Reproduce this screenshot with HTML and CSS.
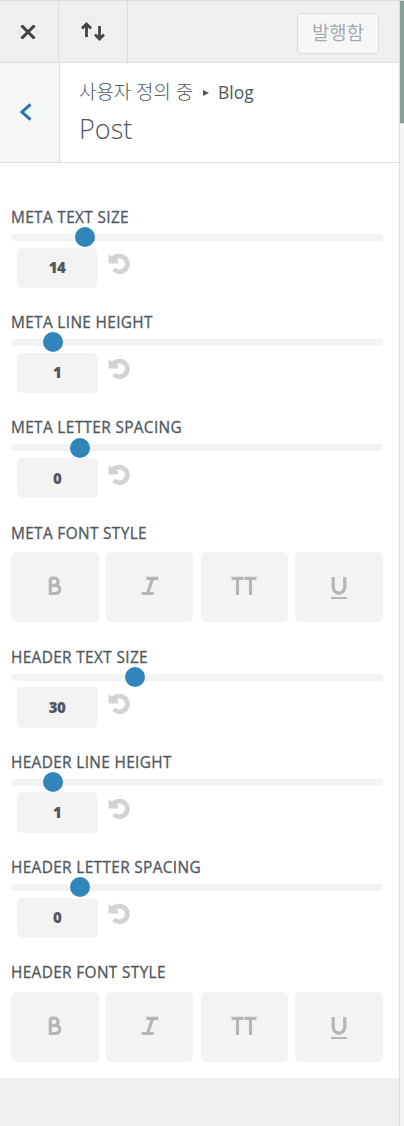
FILE: index.html
```html
<!DOCTYPE html>
<html lang="ko">
  <head>
    <meta charset="UTF-8" />
    <meta name="viewport" content="width=device-width, initial-scale=1.0" />
    <title>Post</title>
    <link rel="stylesheet" href="styles.css">
  </head>
  <body>
    <svg class="sprite">
      <symbol id="undo" viewBox="0 0 22 22">
        <path d="M.5 1v9.500h9.500V7.500L5 2.800 3.500 3.500Z" />
        <path class="ring" d="M4.800 5.400C6.600 3.900 8.700 3.200 11.500 3.200a7.800 7.800 0 1 1-5.600 13.200" />
      </symbol>
      <symbol id="bold" viewBox="0 0 24 24">
        <path d="M7.300 3.200h4.200a3.600 3.600 0 0 1 0 7.200H7.300M11.500 10.400h1.200a4 4 0 0 1 0 8.100H7.300V3.200" />
      </symbol>
      <symbol id="italic" viewBox="0 0 24 24">
        <path d="M8.500 3.300h11.700M3.700 18.500h12M14.600 3.300l-5 15.200" />
      </symbol>
      <symbol id="caps" viewBox="0 0 26 24">
        <path d="M.5 3.300h12M6.500 3.300V20M13.500 3.300h12M19.500 3.300V20" />
      </symbol>
      <symbol id="underline" viewBox="0 0 24 24">
        <path d="M6.200 2v10a5.800 6.200 0 0 0 11.600 0V2" />
        <path class="thin" d="M4 23h16" />
      </symbol>
    </svg>

    <div class="sidebar">
      <header class="actions">
        <button class="close">
          <svg width="16" height="14" viewBox="0 0 16 14"><path d="M1.500.5l13 13M14.500.5l-13 13" /></svg>
        </button>
        <button class="reorder">
          <svg width="24" height="19" viewBox="0 0 24 19">
            <path d="M5.500 15V2M1 6.500l4.500-4.500L10 6.500M18.500 4v13M14 12.500l4.500 4.500L23 12.500" />
          </svg>
        </button>
        <button class="publish">발행함</button>
      </header>

      <div class="section-title">
        <button class="back">
          <svg width="12" height="18" viewBox="0 0 12 18"><path d="M10.500 1.300L2 9l8.500 7.700" /></svg>
        </button>
        <div class="titles">
          <div class="crumbs"><span class="ko">사용자 정의 중</span><i class="arrow"></i><span>Blog</span></div>
          <h3>Post</h3>
        </div>
      </div>

      <div class="controls">
        <div class="control">
          <label>Meta Text Size</label>
          <input type="range" min="0" max="77" value="14">
          <div class="value"><input type="text" value="14"><svg class="reset"><use href="#undo" /></svg></div>
        </div>
        <div class="control">
          <label>Meta Line Height</label>
          <input type="range" min="0" max="11" value="1">
          <div class="value"><input type="text" value="1"><svg class="reset"><use href="#undo" /></svg></div>
        </div>
        <div class="control">
          <label>Meta Letter Spacing</label>
          <input type="range" min="-2" max="10" value="0">
          <div class="value"><input type="text" value="0"><svg class="reset"><use href="#undo" /></svg></div>
        </div>
        <div class="control styles">
          <label>Meta Font Style</label>
          <div class="buttons">
            <button><svg><use href="#bold" /></svg></button>
            <button><svg><use href="#italic" /></svg></button>
            <button><svg class="caps"><use href="#caps" /></svg></button>
            <button><svg><use href="#underline" /></svg></button>
          </div>
        </div>
        <div class="control">
          <label>Header Text Size</label>
          <input type="range" min="0" max="93" value="30">
          <div class="value"><input type="text" value="30"><svg class="reset"><use href="#undo" /></svg></div>
        </div>
        <div class="control">
          <label>Header Line Height</label>
          <input type="range" min="0" max="11" value="1">
          <div class="value"><input type="text" value="1"><svg class="reset"><use href="#undo" /></svg></div>
        </div>
        <div class="control">
          <label>Header Letter Spacing</label>
          <input type="range" min="-2" max="10" value="0">
          <div class="value"><input type="text" value="0"><svg class="reset"><use href="#undo" /></svg></div>
        </div>
        <div class="control styles">
          <label>Header Font Style</label>
          <div class="buttons">
            <button><svg><use href="#bold" /></svg></button>
            <button><svg><use href="#italic" /></svg></button>
            <button><svg class="caps"><use href="#caps" /></svg></button>
            <button><svg><use href="#underline" /></svg></button>
          </div>
        </div>
      </div>
    </div>
    <div class="preview"><div class="hero"></div></div>
  </body>
</html>
```
FILE: styles.css
```css
* {
  box-sizing: border-box;
}
body {
  margin: 0;
  display: flex;
  height: 1126px;
  overflow: hidden;
  border-top: 1px solid #ddd;
  background: #f5f5f5;
  color: #50575e;
  font-family: "Open Sans", "Noto Sans CJK KR", sans-serif;
}
button {
  padding: 0;
  border: 0;
  background: none;
  font-family: inherit;
  cursor: pointer;
}
svg {
  display: block;
  fill: none;
}
.sprite {
  position: absolute;
  width: 0;
  height: 0;
}
.sidebar {
  width: 400px;
  flex: none;
  background: #efefef;
  border-right: 1px solid #ddd;
}
.preview {
  flex: 1;
}
.hero {
  height: 123px;
  background: #879f98;
  border-bottom: 1px solid #dcdcdc;
}

/* top bar */
.actions {
  display: flex;
  height: 62px;
  border-bottom: 1px solid #ddd;
}
.close,
.reorder {
  display: flex;
  align-items: center;
  border-right: 1px solid #ddd;
}
.close {
  width: 59px;
  padding-left: 20px;
}
.close svg {
  stroke: #3c434a;
  stroke-width: 3;
}
.reorder {
  width: 69px;
  padding-left: 22px;
  padding-bottom: 1px;
}
.reorder svg {
  stroke: #444;
  stroke-width: 2.8;
}
.publish {
  width: 82px;
  height: 41px;
  margin: 12px 20px 0 auto;
  padding-bottom: 3px;
  border: 1px solid #ddd;
  border-radius: 4px;
  background: #f6f8f8;
  color: #a7aaad;
  font-size: 18.800px;
  font-weight: 400;
}

/* title */
.section-title {
  display: flex;
  height: 100px;
  background: #fff;
  border-bottom: 1px solid #ddd;
}
.back {
  display: flex;
  align-items: center;
  width: 60px;
  padding-left: 20px;
  padding-bottom: 2px;
  background: #f6f8f8;
  border-right: 1px solid #ddd;
}
.back svg {
  stroke: #2271b1;
  stroke-width: 3;
}
.titles {
  padding: 16px 0 0 19px;
}
.crumbs {
  display: flex;
  align-items: center;
  height: 26px;
  font-size: 17.400px;
}
.crumbs .ko {
  margin-top: -3px;
  font-size: 18.900px;
  font-weight: 300;
}
.arrow {
  margin: 2px 9px 0 10px;
  border: 3px solid transparent;
  border-left: 6px solid #50575e;
  border-right: 0;
}
h3 {
  margin: 5px 0 0;
  font-size: 27px;
  line-height: 37px;
  font-weight: 300;
}

/* controls */
.controls {
  height: 915px;
  padding: 44px 16px 0 11px;
  background: #fff;
}
.control {
  height: 105.200px;
}
.control label {
  display: block;
  height: 20.300px;
  line-height: 21px;
  font-size: 15.400px;
  letter-spacing: 0.350px;
  -webkit-text-stroke: 0.300px #50575e;
  text-transform: uppercase;
  white-space: nowrap;
}
input[type="range"] {
  -webkit-appearance: none;
  appearance: none;
  display: block;
  width: 100%;
  height: 20px;
  margin: 0;
  background: none;
}
input[type="range"]::-webkit-slider-runnable-track {
  height: 7px;
  border-radius: 4px;
  background: #f3f3f3;
}
input[type="range"]::-webkit-slider-thumb {
  -webkit-appearance: none;
  width: 20px;
  height: 20px;
  margin-top: -6.500px;
  border-radius: 50%;
  background: #3086ba;
}
.value {
  display: flex;
  margin: 0.250px 0 0 6px;
}
.value input {
  width: 81px;
  height: 40.300px;
  padding: 0 1px 1px 0;
  border: 0;
  border-radius: 5px;
  background: #f3f3f3;
  color: #50575e;
  font: 800 15px "Open Sans", sans-serif;
  letter-spacing: -0.600px;
  text-align: center;
}
.reset {
  width: 22px;
  height: 22px;
  margin: 5.700px 0 0 10px;
  fill: #d3d3d3;
}
.ring {
  fill: none;
  stroke: #d3d3d3;
  stroke-width: 4.8;
}
.styles {
  height: 124.200px;
}
.buttons {
  display: grid;
  grid-template-columns: repeat(4, 1fr);
  gap: 7.200px;
  padding-top: 9px;
}
.buttons button {
  display: flex;
  align-items: center;
  justify-content: center;
  height: 70px;
  border-radius: 5px;
  background: #f3f3f3;
}
.buttons svg {
  width: 24px;
  height: 24px;
  stroke: #b5b5b5;
  stroke-width: 3.2;
}
.buttons .caps {
  width: 26px;
}
.thin {
  stroke-width: 2;
}
```
